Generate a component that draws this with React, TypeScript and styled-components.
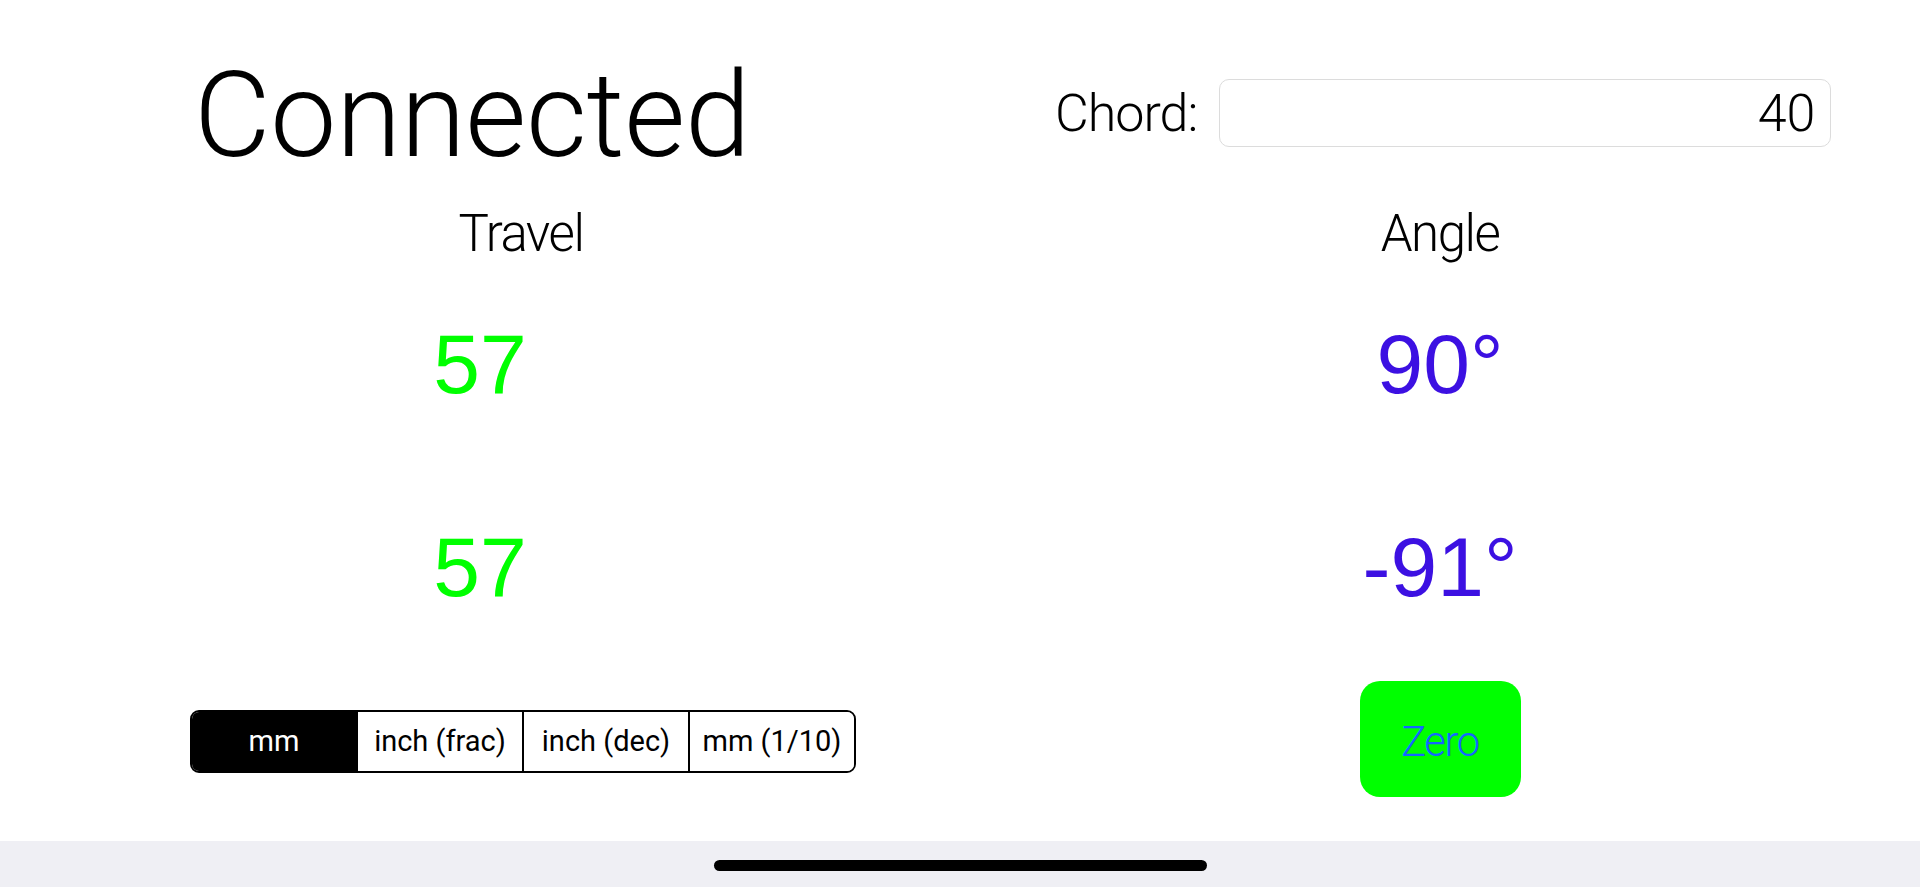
import React from "react";
import styled, { createGlobalStyle } from "styled-components";

const Global = createGlobalStyle`
  html, body { margin: 0; padding: 0; background: #ffffff; }
  body { width: 1920px; height: 887px; overflow: hidden; font-family: "Roboto", "Liberation Sans", sans-serif; color: #000; }
  #root { height: 887px; }
`;

const Screen = styled.div`
  display: flex;
  flex-direction: column;
  width: 1920px;
  height: 887px;
`;

const Main = styled.main`
  flex: 1;
  display: flex;
  flex-direction: column;
  background: #ffffff;
`;

const Row = styled.div<{ $h: number; $mt: number }>`
  display: grid;
  grid-template-columns: 960px 960px;
  align-items: center;
  height: ${(p) => p.$h}px;
  margin-top: ${(p) => p.$mt}px;
`;

const Cell = styled.div<{ $shift?: number }>`
  display: flex;
  justify-content: center;
  align-items: center;
  padding-left: ${(p) => (p.$shift ? p.$shift * 2 : 0)}px;
`;

const Title = styled.h1`
  margin: 0;
  padding-left: 194px;
  font-family: "Roboto", "Liberation Sans", sans-serif;
  font-weight: 300;
  font-size: 118px;
  line-height: 1;
  letter-spacing: -0.3px;
  transform: translateY(2px);
`;

const ChordField = styled.label`
  display: flex;
  align-items: center;
  gap: 22px;
  padding-left: 95px;
`;

const ChordLabel = styled.span`
  font-family: "Roboto", "Liberation Sans", sans-serif;
  font-weight: 300;
  font-size: 52px;
  line-height: 1;
  letter-spacing: -1px;
`;

const ChordInput = styled.input`
  box-sizing: border-box;
  width: 612px;
  height: 68px;
  margin-top: -2px;
  border: 1.5px solid #dcdcdc;
  border-radius: 10px;
  padding: 0 15px;
  text-align: right;
  font-family: "Roboto", "Liberation Sans", sans-serif;
  font-weight: 300;
  font-size: 52px;
  color: #000;
  background: #fff;
  outline: none;
`;

const Label = styled.div`
  font-family: "Roboto", "Liberation Sans", sans-serif;
  font-weight: 300;
  font-size: 51px;
  line-height: 1;
  letter-spacing: -1.5px;
`;

const Value = styled.div<{ $color: string }>`
  font-family: "Liberation Sans", Arial, sans-serif;
  font-size: 84px;
  line-height: 1;
  margin-top: 0;
  color: ${(p) => p.$color};
`;

const Segmented = styled.div`
  display: flex;
  margin-left: 190px;
  width: 666px;
  height: 63px;
  margin-top: 4px;
  box-sizing: border-box;
  border: 2px solid #000;
  border-radius: 9px;
  overflow: hidden;
`;

const Segment = styled.button<{ $active?: boolean }>`
  flex: 1;
  border: none;
  border-left: 2px solid #000;
  margin: 0;
  padding: 0;
  background: ${(p) => (p.$active ? "#000" : "#fff")};
  color: ${(p) => (p.$active ? "#fff" : "#000")};
  font-family: "Roboto", "Liberation Sans", sans-serif;
  font-size: 29px;
  font-weight: 400;
  &:first-child { border-left: none; }
`;

const ZeroButton = styled.button`
  width: 161px;
  height: 116px;
  border: none;
  border-radius: 20px;
  background: #00ff00;
  color: #1466ff;
  font-family: "Roboto", "Liberation Sans", sans-serif;
  font-weight: 300;
  font-size: 42px;
  letter-spacing: -1.5px;
  padding: 4px 0 0 0;
`;

const HomeBar = styled.footer`
  height: 46px;
  background: #efeff4;
  display: flex;
  justify-content: center;
  align-items: flex-start;
`;

const HomeIndicator = styled.div`
  margin-top: 19px;
  width: 493px;
  height: 11px;
  border-radius: 6px;
  background: #000;
`;

const GREEN = "#00ff00";
const BLUE = "#3c10e2";

export default function App() {
  const units = ["mm", "inch (frac)", "inch (dec)", "mm (1/10)"];
  return (
    <Screen>
      <Global />
      <Main>
        <Row $h={120} $mt={54}>
          <Title>Connected</Title>
          <ChordField>
            <ChordLabel>Chord:</ChordLabel>
            <ChordInput defaultValue="40" />
          </ChordField>
        </Row>
        <Row $h={50} $mt={34}>
          <Cell $shift={41}>
            <Label>Travel</Label>
          </Cell>
          <Cell>
            <Label>Angle</Label>
          </Cell>
        </Row>
        <Row $h={80} $mt={64}>
          <Cell>
            <Value $color={GREEN}>57</Value>
          </Cell>
          <Cell>
            <Value $color={BLUE}>90°</Value>
          </Cell>
        </Row>
        <Row $h={80} $mt={123}>
          <Cell>
            <Value $color={GREEN}>57</Value>
          </Cell>
          <Cell>
            <Value $color={BLUE}>-91°</Value>
          </Cell>
        </Row>
        <Row $h={116} $mt={76}>
          <div>
            <Segmented>
              {units.map((u, i) => (
                <Segment key={u} $active={i === 0}>
                  {u}
                </Segment>
              ))}
            </Segmented>
          </div>
          <Cell>
            <ZeroButton>Zero</ZeroButton>
          </Cell>
        </Row>
      </Main>
      <HomeBar>
        <HomeIndicator />
      </HomeBar>
    </Screen>
  );
}
